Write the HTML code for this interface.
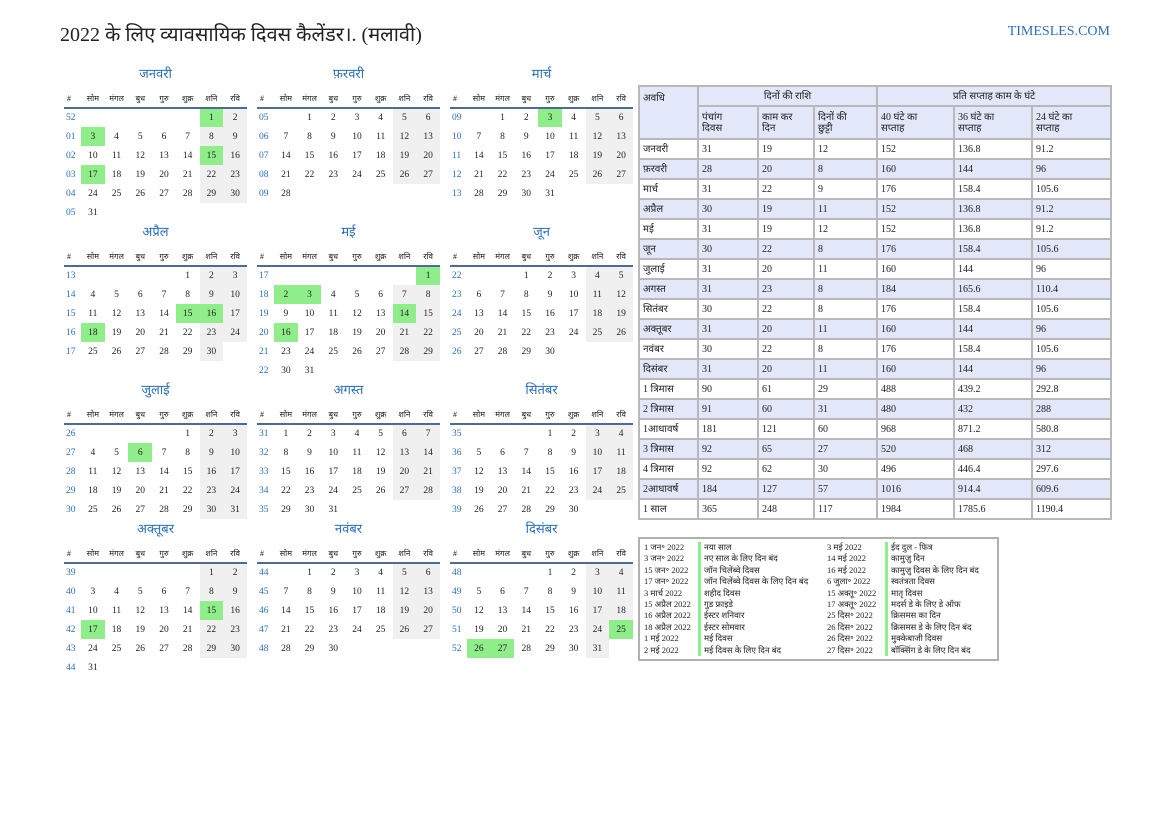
<!DOCTYPE html>
<html><head><meta charset="utf-8">
<style>
*{margin:0;padding:0;box-sizing:border-box}
body{width:1169px;height:827px;background:#fff;position:relative;font-family:"Liberation Serif","Noto Serif CJK SC","Noto Sans CJK SC",serif;color:#222;overflow:hidden}
.title{position:absolute;left:60px;top:20px;font-size:20px;color:#222;white-space:nowrap}
.site{position:absolute;right:59px;top:24px;font-size:14px;color:#2a6ebb}
.m{position:absolute;width:183px}
.m h3{font-weight:normal;font-size:13px;color:#2a6ebb;text-align:center;height:26px;line-height:21px}
.m table{border-collapse:collapse;width:183px;table-layout:fixed}
.m th{font-weight:normal;font-size:8px;height:19px;border-bottom:2px solid #4f6a94;text-align:center}
.m th:first-child{width:17px;text-align:left;padding-left:3px}
.m td{font-size:9.5px;height:19px;text-align:center}
.m td:first-child{color:#2a6ebb;text-align:left;padding-left:2px}
.w{background:#f0f0f0}
.g{background:#90ee8a}
table.s{position:absolute;left:638px;top:85px;border-collapse:collapse;width:472px;table-layout:fixed;font-size:10px}
table.s td,table.s th{border:2px solid #b8b8b8;font-weight:normal;text-align:left;padding:0 3px;height:20px;line-height:11px}
table.s thead th{background:#e3e7fa}
table.s tbody tr:nth-child(even) td{background:#e3e7fa}
.h{position:absolute;left:638px;top:537px;width:361px;height:124px;border:2px solid #b0b0b0;font-size:8.5px}
.h div{position:absolute;white-space:nowrap;line-height:11.4px}
.b{border-left:3px solid #90ee8a;padding-left:3px}
</style></head><body>
<div class="title">2022 के लिए व्यावसायिक दिवस कैलेंडर।. (मलावी)</div>
<div class="site">TIMESLES.COM</div>

<div class="m" style="left:64px;top:63px"><h3>जनवरी</h3><table><tr><th>#</th><th>सोम</th><th>मंगल</th><th>बुध</th><th>गुरु</th><th>शुक्र</th><th>शनि</th><th>रवि</th></tr>
<tr><td>52</td><td></td><td></td><td></td><td></td><td></td><td class="g">1</td><td class="w">2</td></tr>
<tr><td>01</td><td class="g">3</td><td>4</td><td>5</td><td>6</td><td>7</td><td class="w">8</td><td class="w">9</td></tr>
<tr><td>02</td><td>10</td><td>11</td><td>12</td><td>13</td><td>14</td><td class="g">15</td><td class="w">16</td></tr>
<tr><td>03</td><td class="g">17</td><td>18</td><td>19</td><td>20</td><td>21</td><td class="w">22</td><td class="w">23</td></tr>
<tr><td>04</td><td>24</td><td>25</td><td>26</td><td>27</td><td>28</td><td class="w">29</td><td class="w">30</td></tr>
<tr><td>05</td><td>31</td><td></td><td></td><td></td><td></td><td></td><td></td></tr></table></div>

<div class="m" style="left:257px;top:63px"><h3>फ़रवरी</h3><table><tr><th>#</th><th>सोम</th><th>मंगल</th><th>बुध</th><th>गुरु</th><th>शुक्र</th><th>शनि</th><th>रवि</th></tr>
<tr><td>05</td><td></td><td>1</td><td>2</td><td>3</td><td>4</td><td class="w">5</td><td class="w">6</td></tr>
<tr><td>06</td><td>7</td><td>8</td><td>9</td><td>10</td><td>11</td><td class="w">12</td><td class="w">13</td></tr>
<tr><td>07</td><td>14</td><td>15</td><td>16</td><td>17</td><td>18</td><td class="w">19</td><td class="w">20</td></tr>
<tr><td>08</td><td>21</td><td>22</td><td>23</td><td>24</td><td>25</td><td class="w">26</td><td class="w">27</td></tr>
<tr><td>09</td><td>28</td><td></td><td></td><td></td><td></td><td></td><td></td></tr></table></div>

<div class="m" style="left:450px;top:63px"><h3>मार्च</h3><table><tr><th>#</th><th>सोम</th><th>मंगल</th><th>बुध</th><th>गुरु</th><th>शुक्र</th><th>शनि</th><th>रवि</th></tr>
<tr><td>09</td><td></td><td>1</td><td>2</td><td class="g">3</td><td>4</td><td class="w">5</td><td class="w">6</td></tr>
<tr><td>10</td><td>7</td><td>8</td><td>9</td><td>10</td><td>11</td><td class="w">12</td><td class="w">13</td></tr>
<tr><td>11</td><td>14</td><td>15</td><td>16</td><td>17</td><td>18</td><td class="w">19</td><td class="w">20</td></tr>
<tr><td>12</td><td>21</td><td>22</td><td>23</td><td>24</td><td>25</td><td class="w">26</td><td class="w">27</td></tr>
<tr><td>13</td><td>28</td><td>29</td><td>30</td><td>31</td><td></td><td></td><td></td></tr></table></div>

<div class="m" style="left:64px;top:221px"><h3>अप्रैल</h3><table><tr><th>#</th><th>सोम</th><th>मंगल</th><th>बुध</th><th>गुरु</th><th>शुक्र</th><th>शनि</th><th>रवि</th></tr>
<tr><td>13</td><td></td><td></td><td></td><td></td><td>1</td><td class="w">2</td><td class="w">3</td></tr>
<tr><td>14</td><td>4</td><td>5</td><td>6</td><td>7</td><td>8</td><td class="w">9</td><td class="w">10</td></tr>
<tr><td>15</td><td>11</td><td>12</td><td>13</td><td>14</td><td class="g">15</td><td class="g">16</td><td class="w">17</td></tr>
<tr><td>16</td><td class="g">18</td><td>19</td><td>20</td><td>21</td><td>22</td><td class="w">23</td><td class="w">24</td></tr>
<tr><td>17</td><td>25</td><td>26</td><td>27</td><td>28</td><td>29</td><td class="w">30</td><td></td></tr></table></div>

<div class="m" style="left:257px;top:221px"><h3>मई</h3><table><tr><th>#</th><th>सोम</th><th>मंगल</th><th>बुध</th><th>गुरु</th><th>शुक्र</th><th>शनि</th><th>रवि</th></tr>
<tr><td>17</td><td></td><td></td><td></td><td></td><td></td><td></td><td class="g">1</td></tr>
<tr><td>18</td><td class="g">2</td><td class="g">3</td><td>4</td><td>5</td><td>6</td><td class="w">7</td><td class="w">8</td></tr>
<tr><td>19</td><td>9</td><td>10</td><td>11</td><td>12</td><td>13</td><td class="g">14</td><td class="w">15</td></tr>
<tr><td>20</td><td class="g">16</td><td>17</td><td>18</td><td>19</td><td>20</td><td class="w">21</td><td class="w">22</td></tr>
<tr><td>21</td><td>23</td><td>24</td><td>25</td><td>26</td><td>27</td><td class="w">28</td><td class="w">29</td></tr>
<tr><td>22</td><td>30</td><td>31</td><td></td><td></td><td></td><td></td><td></td></tr></table></div>

<div class="m" style="left:450px;top:221px"><h3>जून</h3><table><tr><th>#</th><th>सोम</th><th>मंगल</th><th>बुध</th><th>गुरु</th><th>शुक्र</th><th>शनि</th><th>रवि</th></tr>
<tr><td>22</td><td></td><td></td><td>1</td><td>2</td><td>3</td><td class="w">4</td><td class="w">5</td></tr>
<tr><td>23</td><td>6</td><td>7</td><td>8</td><td>9</td><td>10</td><td class="w">11</td><td class="w">12</td></tr>
<tr><td>24</td><td>13</td><td>14</td><td>15</td><td>16</td><td>17</td><td class="w">18</td><td class="w">19</td></tr>
<tr><td>25</td><td>20</td><td>21</td><td>22</td><td>23</td><td>24</td><td class="w">25</td><td class="w">26</td></tr>
<tr><td>26</td><td>27</td><td>28</td><td>29</td><td>30</td><td></td><td></td><td></td></tr></table></div>

<div class="m" style="left:64px;top:379px"><h3>जुलाई</h3><table><tr><th>#</th><th>सोम</th><th>मंगल</th><th>बुध</th><th>गुरु</th><th>शुक्र</th><th>शनि</th><th>रवि</th></tr>
<tr><td>26</td><td></td><td></td><td></td><td></td><td>1</td><td class="w">2</td><td class="w">3</td></tr>
<tr><td>27</td><td>4</td><td>5</td><td class="g">6</td><td>7</td><td>8</td><td class="w">9</td><td class="w">10</td></tr>
<tr><td>28</td><td>11</td><td>12</td><td>13</td><td>14</td><td>15</td><td class="w">16</td><td class="w">17</td></tr>
<tr><td>29</td><td>18</td><td>19</td><td>20</td><td>21</td><td>22</td><td class="w">23</td><td class="w">24</td></tr>
<tr><td>30</td><td>25</td><td>26</td><td>27</td><td>28</td><td>29</td><td class="w">30</td><td class="w">31</td></tr></table></div>

<div class="m" style="left:257px;top:379px"><h3>अगस्त</h3><table><tr><th>#</th><th>सोम</th><th>मंगल</th><th>बुध</th><th>गुरु</th><th>शुक्र</th><th>शनि</th><th>रवि</th></tr>
<tr><td>31</td><td>1</td><td>2</td><td>3</td><td>4</td><td>5</td><td class="w">6</td><td class="w">7</td></tr>
<tr><td>32</td><td>8</td><td>9</td><td>10</td><td>11</td><td>12</td><td class="w">13</td><td class="w">14</td></tr>
<tr><td>33</td><td>15</td><td>16</td><td>17</td><td>18</td><td>19</td><td class="w">20</td><td class="w">21</td></tr>
<tr><td>34</td><td>22</td><td>23</td><td>24</td><td>25</td><td>26</td><td class="w">27</td><td class="w">28</td></tr>
<tr><td>35</td><td>29</td><td>30</td><td>31</td><td></td><td></td><td></td><td></td></tr></table></div>

<div class="m" style="left:450px;top:379px"><h3>सितंबर</h3><table><tr><th>#</th><th>सोम</th><th>मंगल</th><th>बुध</th><th>गुरु</th><th>शुक्र</th><th>शनि</th><th>रवि</th></tr>
<tr><td>35</td><td></td><td></td><td></td><td>1</td><td>2</td><td class="w">3</td><td class="w">4</td></tr>
<tr><td>36</td><td>5</td><td>6</td><td>7</td><td>8</td><td>9</td><td class="w">10</td><td class="w">11</td></tr>
<tr><td>37</td><td>12</td><td>13</td><td>14</td><td>15</td><td>16</td><td class="w">17</td><td class="w">18</td></tr>
<tr><td>38</td><td>19</td><td>20</td><td>21</td><td>22</td><td>23</td><td class="w">24</td><td class="w">25</td></tr>
<tr><td>39</td><td>26</td><td>27</td><td>28</td><td>29</td><td>30</td><td></td><td></td></tr></table></div>

<div class="m" style="left:64px;top:518px"><h3>अक्तूबर</h3><table><tr><th>#</th><th>सोम</th><th>मंगल</th><th>बुध</th><th>गुरु</th><th>शुक्र</th><th>शनि</th><th>रवि</th></tr>
<tr><td>39</td><td></td><td></td><td></td><td></td><td></td><td class="w">1</td><td class="w">2</td></tr>
<tr><td>40</td><td>3</td><td>4</td><td>5</td><td>6</td><td>7</td><td class="w">8</td><td class="w">9</td></tr>
<tr><td>41</td><td>10</td><td>11</td><td>12</td><td>13</td><td>14</td><td class="g">15</td><td class="w">16</td></tr>
<tr><td>42</td><td class="g">17</td><td>18</td><td>19</td><td>20</td><td>21</td><td class="w">22</td><td class="w">23</td></tr>
<tr><td>43</td><td>24</td><td>25</td><td>26</td><td>27</td><td>28</td><td class="w">29</td><td class="w">30</td></tr>
<tr><td>44</td><td>31</td><td></td><td></td><td></td><td></td><td></td><td></td></tr></table></div>

<div class="m" style="left:257px;top:518px"><h3>नवंबर</h3><table><tr><th>#</th><th>सोम</th><th>मंगल</th><th>बुध</th><th>गुरु</th><th>शुक्र</th><th>शनि</th><th>रवि</th></tr>
<tr><td>44</td><td></td><td>1</td><td>2</td><td>3</td><td>4</td><td class="w">5</td><td class="w">6</td></tr>
<tr><td>45</td><td>7</td><td>8</td><td>9</td><td>10</td><td>11</td><td class="w">12</td><td class="w">13</td></tr>
<tr><td>46</td><td>14</td><td>15</td><td>16</td><td>17</td><td>18</td><td class="w">19</td><td class="w">20</td></tr>
<tr><td>47</td><td>21</td><td>22</td><td>23</td><td>24</td><td>25</td><td class="w">26</td><td class="w">27</td></tr>
<tr><td>48</td><td>28</td><td>29</td><td>30</td><td></td><td></td><td></td><td></td></tr></table></div>

<div class="m" style="left:450px;top:518px"><h3>दिसंबर</h3><table><tr><th>#</th><th>सोम</th><th>मंगल</th><th>बुध</th><th>गुरु</th><th>शुक्र</th><th>शनि</th><th>रवि</th></tr>
<tr><td>48</td><td></td><td></td><td></td><td>1</td><td>2</td><td class="w">3</td><td class="w">4</td></tr>
<tr><td>49</td><td>5</td><td>6</td><td>7</td><td>8</td><td>9</td><td class="w">10</td><td class="w">11</td></tr>
<tr><td>50</td><td>12</td><td>13</td><td>14</td><td>15</td><td>16</td><td class="w">17</td><td class="w">18</td></tr>
<tr><td>51</td><td>19</td><td>20</td><td>21</td><td>22</td><td>23</td><td class="w">24</td><td class="g">25</td></tr>
<tr><td>52</td><td class="g">26</td><td class="g">27</td><td>28</td><td>29</td><td>30</td><td class="w">31</td><td></td></tr></table></div>

<table class="s">
<colgroup><col style="width:59px"><col style="width:60px"><col style="width:56px"><col style="width:63px"><col style="width:77px"><col style="width:78px"><col style="width:79px"></colgroup>
<thead><tr><th rowspan="2" style="vertical-align:top;padding-top:6px">अवधि</th><th colspan="3" style="text-align:center">दिनों की राशि</th><th colspan="3" style="text-align:center">प्रति सप्ताह काम के घंटे</th></tr>
<tr><th style="height:33px">पंचांग<br>दिवस</th><th>काम कर<br>दिन</th><th>दिनों की<br>छुट्टी</th><th>40 घंटे का<br>सप्ताह</th><th>36 घंटे का<br>सप्ताह</th><th>24 घंटे का<br>सप्ताह</th></tr></thead>
<tbody>
<tr><td>जनवरी</td><td>31</td><td>19</td><td>12</td><td>152</td><td>136.8</td><td>91.2</td></tr>
<tr><td>फ़रवरी</td><td>28</td><td>20</td><td>8</td><td>160</td><td>144</td><td>96</td></tr>
<tr><td>मार्च</td><td>31</td><td>22</td><td>9</td><td>176</td><td>158.4</td><td>105.6</td></tr>
<tr><td>अप्रैल</td><td>30</td><td>19</td><td>11</td><td>152</td><td>136.8</td><td>91.2</td></tr>
<tr><td>मई</td><td>31</td><td>19</td><td>12</td><td>152</td><td>136.8</td><td>91.2</td></tr>
<tr><td>जून</td><td>30</td><td>22</td><td>8</td><td>176</td><td>158.4</td><td>105.6</td></tr>
<tr><td>जुलाई</td><td>31</td><td>20</td><td>11</td><td>160</td><td>144</td><td>96</td></tr>
<tr><td>अगस्त</td><td>31</td><td>23</td><td>8</td><td>184</td><td>165.6</td><td>110.4</td></tr>
<tr><td>सितंबर</td><td>30</td><td>22</td><td>8</td><td>176</td><td>158.4</td><td>105.6</td></tr>
<tr><td>अक्तूबर</td><td>31</td><td>20</td><td>11</td><td>160</td><td>144</td><td>96</td></tr>
<tr><td>नवंबर</td><td>30</td><td>22</td><td>8</td><td>176</td><td>158.4</td><td>105.6</td></tr>
<tr><td>दिसंबर</td><td>31</td><td>20</td><td>11</td><td>160</td><td>144</td><td>96</td></tr>
<tr><td>1 त्रिमास</td><td>90</td><td>61</td><td>29</td><td>488</td><td>439.2</td><td>292.8</td></tr>
<tr><td>2 त्रिमास</td><td>91</td><td>60</td><td>31</td><td>480</td><td>432</td><td>288</td></tr>
<tr><td>1आधावर्ष</td><td>181</td><td>121</td><td>60</td><td>968</td><td>871.2</td><td>580.8</td></tr>
<tr><td>3 त्रिमास</td><td>92</td><td>65</td><td>27</td><td>520</td><td>468</td><td>312</td></tr>
<tr><td>4 त्रिमास</td><td>92</td><td>62</td><td>30</td><td>496</td><td>446.4</td><td>297.6</td></tr>
<tr><td>2आधावर्ष</td><td>184</td><td>127</td><td>57</td><td>1016</td><td>914.4</td><td>609.6</td></tr>
<tr><td>1 साल</td><td>365</td><td>248</td><td>117</td><td>1984</td><td>1785.6</td><td>1190.4</td></tr>
</tbody></table>

<div class="h">
<div style="left:4px;top:3px">1 जन॰ 2022<br>3 जन॰ 2022<br>15 जन॰ 2022<br>17 जन॰ 2022<br>3 मार्च 2022<br>15 अप्रैल 2022<br>16 अप्रैल 2022<br>18 अप्रैल 2022<br>1 मई 2022<br>2 मई 2022</div>
<div class="b" style="left:58px;top:3px">नया साल<br>नए साल के लिए दिन बंद<br>जॉन चिलेंब्वे दिवस<br>जॉन चिलेंब्वे दिवस के लिए दिन बंद<br>शहीद दिवस<br>गुड फ्राइडे<br>ईस्टर शनिवार<br>ईस्टर सोमवार<br>मई दिवस<br>मई दिवस के लिए दिन बंद</div>
<div style="left:187px;top:3px">3 मई 2022<br>14 मई 2022<br>16 मई 2022<br>6 जुला॰ 2022<br>15 अक्तू॰ 2022<br>17 अक्तू॰ 2022<br>25 दिस॰ 2022<br>26 दिस॰ 2022<br>26 दिस॰ 2022<br>27 दिस॰ 2022</div>
<div class="b" style="left:245px;top:3px">ईद दुल - फित्र<br>कामुज़ु दिन<br>कामुज़ु दिवस के लिए दिन बंद<br>स्वतंत्रता दिवस<br>मातृ दिवस<br>मदर्स डे के लिए डे ऑफ<br>क्रिसमस का दिन<br>क्रिसमस डे के लिए दिन बंद<br>मुक्केबाजी दिवस<br>बॉक्सिंग डे के लिए दिन बंद</div>
</div>
</body></html>
